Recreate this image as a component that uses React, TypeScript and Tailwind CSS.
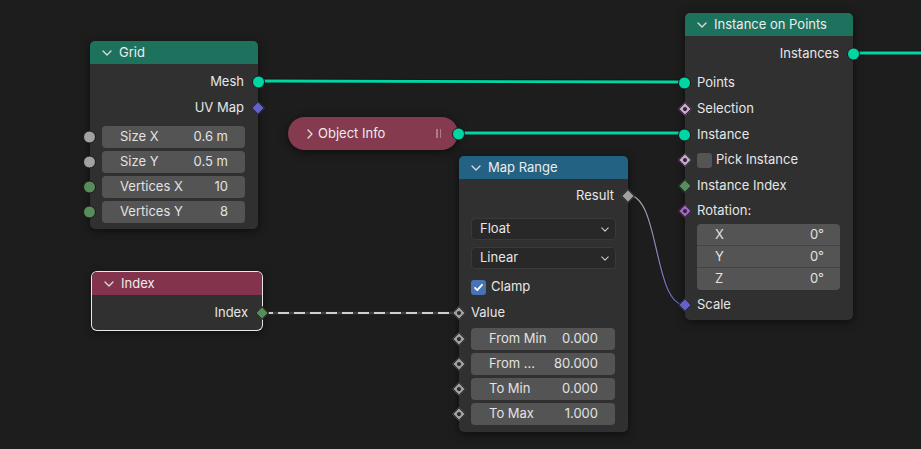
import type { ReactNode } from 'react'

// Blender-ish geometry nodes canvas
type SocketKind = 'circle' | 'diamond' | 'diamondDot'

function Socket({ kind, color, side }: { kind: SocketKind; color: string; side: 'left' | 'right' }) {
  const pos = side === 'left' ? 'left-[-7px]' : 'right-[-7px]'
  if (kind === 'circle') {
    return (
      <span
        className={`absolute ${pos} top-1/2 -translate-y-1/2 w-[13px] h-[13px] rounded-full border border-[#181818]`}
        style={{ background: color }}
      />
    )
  }
  return (
    <span
      className={`absolute ${pos} top-1/2 -translate-y-1/2 w-[14px] h-[14px] flex items-center justify-center`}
    >
      <span
        className="w-[10px] h-[10px] rotate-45 border border-[#181818] flex items-center justify-center"
        style={{ background: color }}
      >
        {kind === 'diamondDot' && <span className="w-[4px] h-[4px] rounded-full bg-[#2b2b2b]" />}
      </span>
    </span>
  )
}

function ChevronDown({ className = '' }: { className?: string }) {
  return (
    <svg className={className} width="10" height="6" viewBox="0 0 10 6" fill="none" stroke="currentColor" strokeWidth={1.3} strokeLinecap="round" strokeLinejoin="round">
      <path d="M1 1l4 4 4-4" />
    </svg>
  )
}

function ChevronRight({ className = '' }: { className?: string }) {
  return (
    <svg className={className} width="6" height="10" viewBox="0 0 6 10" fill="none" stroke="currentColor" strokeWidth={1.3} strokeLinecap="round" strokeLinejoin="round">
      <path d="M1 1l4 4-4 4" />
    </svg>
  )
}

function Node({ className, header, color, children, selected }: { className: string; header: string; color: string; children: ReactNode; selected?: boolean }) {
  return (
    <div
      className={`absolute ${className} rounded-[5px] bg-[#303030] shadow-[0_2px_10px_rgba(0,0,0,0.55)] ${selected ? 'ring-1 ring-[#e8e8e8]' : ''}`}
    >
      <div className={`h-[23px] rounded-t-[5px] ${color} flex items-center pl-[12px] gap-[7px] text-[#ececec]`}>
        <ChevronDown className="text-[#dcdcdc]" />
        <span>{header}</span>
      </div>
      {children}
    </div>
  )
}

function OutRow({ label, kind, color, h = 'h-[26px]' }: { label: string; kind: SocketKind; color: string; h?: string }) {
  return (
    <div className={`relative ${h} flex items-center justify-end pr-[14px]`}>
      <span>{label}</span>
      <Socket kind={kind} color={color} side="right" />
    </div>
  )
}

function InRow({ label, kind, color, h = 'h-[25px]', children }: { label?: string; kind?: SocketKind; color?: string; h?: string; children?: ReactNode }) {
  return (
    <div className={`relative ${h} flex items-center pl-[12px]`}>
      {children ?? <span>{label}</span>}
      {kind && color && <Socket kind={kind} color={color} side="left" />}
    </div>
  )
}

function Field({ label, value, kind, color }: { label: string; value: string; kind: SocketKind; color: string }) {
  return (
    <div className="relative pl-[12px] pr-[13px]">
      <div className="h-[22px] rounded-[4px] bg-[#545454] flex items-center justify-between pl-[18px] pr-[17px] text-[#e2e2e2]">
        <span>{label}</span>
        <span>{value}</span>
      </div>
      <Socket kind={kind} color={color} side="left" />
    </div>
  )
}

function Dropdown({ label, className }: { label: string; className: string }) {
  return (
    <div className={`mx-[12px] ${className} h-[22px] rounded-[4px] bg-[#282828] border border-[#3a3a3a] flex items-center justify-between pl-[8px] pr-[6px]`}>
      <span>{label}</span>
      <ChevronDown className="text-[#cfcfcf] w-[8px] h-[5px]" />
    </div>
  )
}

const TEAL = '#00d6a3'
const GRAY = '#a1a1a1'
const INT = '#598c5c'
const VEC = '#6363c7'
const ROT = '#a663c7'
const BOOL = '#cca6d6'

export default function App() {
  return (
    <div className="relative w-[921px] h-[449px] overflow-hidden bg-[#1d1d1d] text-[13px] text-[#e6e6e6] font-['Inter','Noto_Sans',sans-serif]">
      {/* links */}
      <svg className="absolute inset-0" width="921" height="449" viewBox="0 0 921 449">
        <defs>
          <linearGradient id="resScale" x1="628" y1="195" x2="685" y2="305" gradientUnits="userSpaceOnUse">
            <stop offset="0" stopColor={GRAY} />
            <stop offset="1" stopColor={VEC} />
          </linearGradient>
        </defs>
        <g fill="none" strokeLinecap="round">
          <path d="M258 81 L685 82" stroke="#141414" strokeWidth={4.8} />
          <path d="M258 81 L685 82" stroke={TEAL} strokeWidth={2.9} />
          <path d="M457 133 L685 133" stroke="#141414" strokeWidth={4.8} />
          <path d="M457 133 L685 133" stroke={TEAL} strokeWidth={2.9} />
          <path d="M853 53 L925 53" stroke="#141414" strokeWidth={4.8} />
          <path d="M853 53 L925 53" stroke={TEAL} strokeWidth={2.9} />
          <path d="M628 195 C660 195 653 305 685 305" stroke="#141414" strokeWidth={2.6} />
          <path d="M628 195 C660 195 653 305 685 305" stroke="url(#resScale)" strokeWidth={1.3} />
          <path d="M262 313 L459 313" stroke="#3e3e3e" strokeWidth={2.4} />
          <path d="M262 313 L459 313" stroke="#cfcfcf" strokeWidth={1.8} strokeDasharray="11 5" strokeLinecap="butt" />
        </g>
      </svg>

      {/* Grid */}
      <Node className="left-[90px] top-[41px] w-[168px]" header="Grid" color="bg-[#1d725e]">
        <div className="pt-[5px] pb-[6px]">
          <OutRow label="Mesh" kind="circle" color={TEAL} />
          <OutRow label="UV Map" kind="diamond" color={VEC} />
          <div className="mt-[5px] flex flex-col gap-[3px]">
            <Field label="Size X" value="0.6 m" kind="circle" color={GRAY} />
            <Field label="Size Y" value="0.5 m" kind="circle" color={GRAY} />
            <Field label="Vertices X" value="10" kind="circle" color={INT} />
            <Field label="Vertices Y" value="8" kind="circle" color={INT} />
          </div>
        </div>
      </Node>

      {/* Object Info (collapsed) */}
      <div className="absolute left-[288px] top-[117px] w-[170px] h-[33px] rounded-full bg-[#853a50] shadow-[0_2px_10px_rgba(0,0,0,0.55)] flex items-center pl-[19px] pr-[12px] text-[#ececec]">
        <ChevronRight className="text-[#e0e0e0]" />
        <span className="ml-[5px] flex-1">Object Info</span>
        <span className="flex gap-[2px] mr-[5px]">
          <span className="w-[1.5px] h-[9px] bg-[#b07a89]" />
          <span className="w-[1.5px] h-[9px] bg-[#b07a89]" />
        </span>
        <Socket kind="circle" color={TEAL} side="right" />
      </div>

      {/* Index */}
      <Node className="left-[92px] top-[272px] w-[170px]" header="Index" color="bg-[#83334b]" selected>
        <div className="pt-[5px] pb-[4px]">
          <OutRow label="Index" kind="diamond" color={INT} />
        </div>
      </Node>

      {/* Map Range */}
      <Node className="left-[459px] top-[156px] w-[169px]" header="Map Range" color="bg-[#246283]">
        <div className="pt-[4px] pb-[7px]">
          <OutRow label="Result" kind="diamond" color={GRAY} />
          <Dropdown label="Float" className="mt-[9px]" />
          <Dropdown label="Linear" className="mt-[7px]" />
          <div className="mt-[7px] h-[22px] flex items-center pl-[12px] gap-[5px]">
            <span className="w-[15px] h-[15px] rounded-[3px] bg-[#4772b3] flex items-center justify-center">
              <svg width="11" height="11" viewBox="0 0 11 11" fill="none" stroke="#fff" strokeWidth={1.8} strokeLinecap="round" strokeLinejoin="round">
                <path d="M2 5.8l2.3 2.4L9 2.8" />
              </svg>
            </span>
            <span>Clamp</span>
          </div>
          <InRow label="Value" kind="diamondDot" color={GRAY} h="h-[22px] mt-[4px]" />
          <div className="mt-[4px] flex flex-col gap-[3px]">
            <Field label="From Min" value="0.000" kind="diamondDot" color={GRAY} />
            <Field label="From ..." value="80.000" kind="diamondDot" color={GRAY} />
            <Field label="To Min" value="0.000" kind="diamondDot" color={GRAY} />
            <Field label="To Max" value="1.000" kind="diamondDot" color={GRAY} />
          </div>
        </div>
      </Node>

      {/* Instance on Points */}
      <Node className="left-[685px] top-[13px] w-[168px]" header="Instance on Points" color="bg-[#1d725e]">
        <div className="pt-[5px] pb-[3px]">
          <OutRow label="Instances" kind="circle" color={TEAL} />
          <InRow label="Points" kind="circle" color={TEAL} h="h-[26px] mt-[3px]" />
          <InRow label="Selection" kind="diamondDot" color={BOOL} h="h-[26px]" />
          <InRow label="Instance" kind="circle" color={TEAL} h="h-[25px]" />
          <InRow kind="diamondDot" color={BOOL} h="h-[26px]">
            <span className="w-[15px] h-[15px] rounded-[3px] bg-[#545454]" />
            <span className="ml-[4px]">Pick Instance</span>
          </InRow>
          <InRow label="Instance Index" kind="diamond" color={INT} h="h-[25px]" />
          <InRow label="Rotation:" kind="diamondDot" color={ROT} h="h-[25px]" />
          <div className="mt-[1px] mx-[12px] mr-[13px] rounded-[4px] bg-[#545454] flex flex-col divide-y divide-[#444444] text-[#e2e2e2]">
            {['X', 'Y', 'Z'].map(a => (
              <div key={a} className="h-[22px] flex items-center justify-between pl-[18px] pr-[16px]">
                <span>{a}</span>
                <span>0°</span>
              </div>
            ))}
          </div>
          <InRow label="Scale" kind="diamond" color={VEC} h="h-[25px] mt-[2px]" />
        </div>
      </Node>
    </div>
  )
}
